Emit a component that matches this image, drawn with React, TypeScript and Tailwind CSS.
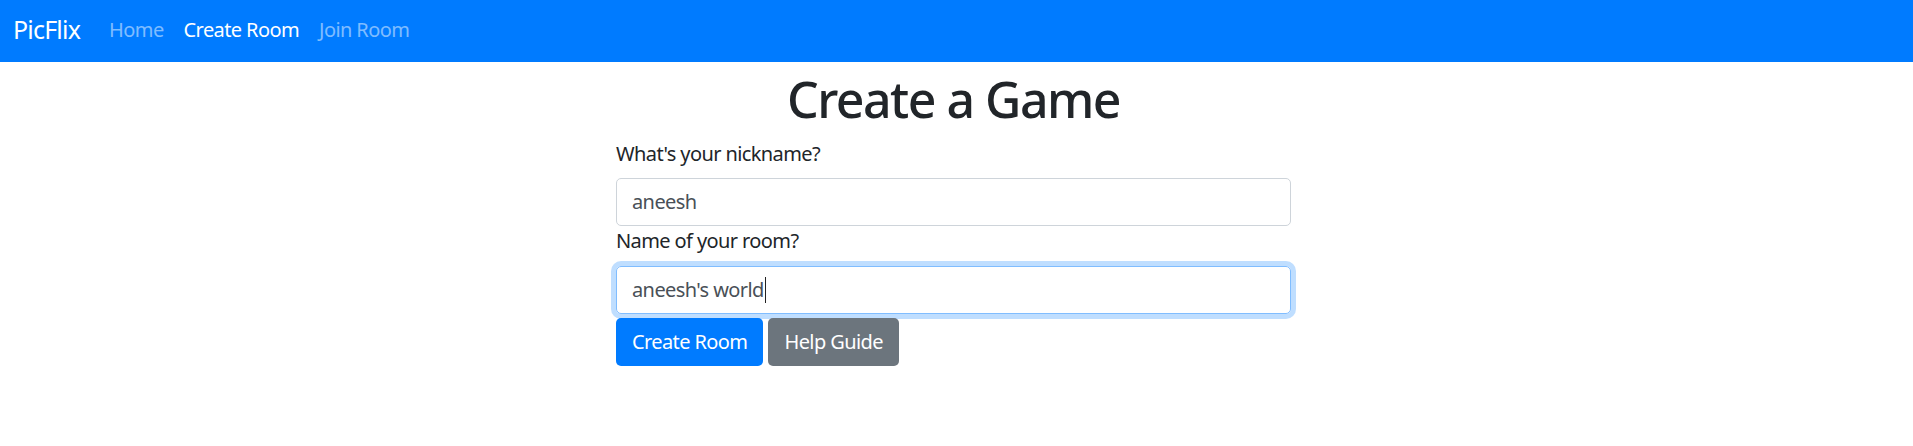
export default function App() {
  const font = { fontFamily: '"Noto Sans", "Open Sans", sans-serif' };
  return (
    <div className="min-h-[446px] bg-white tracking-[-0.6px]" style={font}>
      <nav className="h-[62px] bg-[#007bff] flex items-center pl-[13px] pb-[3px]">
        <span className="text-[25px] text-white leading-none mr-[19px] tracking-[-0.8px]">PicFlix</span>
        <a className="px-[10px] text-[20px] text-white/50">Home</a>
        <a className="px-[10px] text-[20px] text-white">Create Room</a>
        <a className="px-[10px] text-[20px] text-white/50">Join Room</a>
      </nav>
      <div className="w-[675px] mx-auto relative -left-[3px]">
        <h1 className="mt-[7px] mb-[10px] text-center text-[50px] leading-[60px] font-medium text-[#212529] tracking-[-1.5px]">
          Create a Game
        </h1>
        <label className="block text-[20px] leading-[30px] text-[#212529] mb-[9px]">What's your nickname?</label>
        <div className="h-[48px] border border-[#ced4da] rounded-[5px] px-[15px] flex items-center text-[20px] text-[#495057]">
          aneesh
        </div>
        <label className="block text-[20px] leading-[30px] text-[#212529] mb-[10px]">Name of your room?</label>
        <div className="h-[48px] border border-[#80bdff] rounded-[5px] px-[15px] flex items-center text-[20px] text-[#495057] shadow-[0_0_0_5px_rgba(0,123,255,0.25)]">
          aneesh's world<span className="inline-block w-px h-[26px] bg-[#222] ml-px" />
        </div>
        <div className="flex gap-[5px] mt-[4px]">
          <button className="h-[48px] px-[16px] rounded-[5px] bg-[#007bff] text-white text-[20px]">Create Room</button>
          <button className="h-[48px] px-[16px] rounded-[5px] bg-[#6c757d] text-white text-[20px]">Help Guide</button>
        </div>
      </div>
    </div>
  );
}
